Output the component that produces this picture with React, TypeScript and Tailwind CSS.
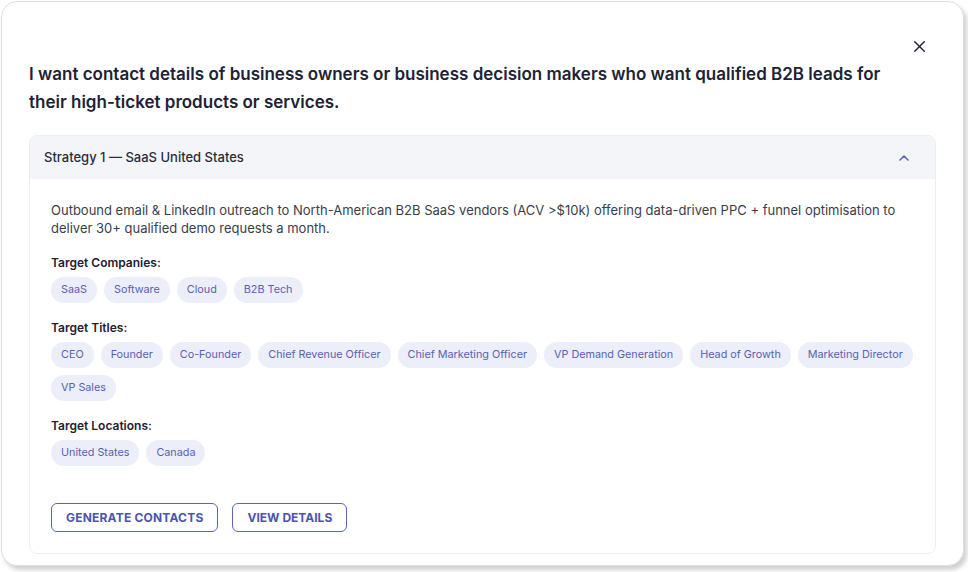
import React from "react";
import { X, ChevronUp } from "lucide-react";

const companies = ["SaaS", "Software", "Cloud", "B2B Tech"];
const titles = [
  "CEO",
  "Founder",
  "Co-Founder",
  "Chief Revenue Officer",
  "Chief Marketing Officer",
  "VP Demand Generation",
  "Head of Growth",
  "Marketing Director",
  "VP Sales",
];
const locations = ["United States", "Canada"];

const Chip = ({ label }: { label: string }) => (
  <span className="inline-flex items-center h-[26px] px-[10px] rounded-full bg-[#eceef9] text-[10.8px] text-[#5a61b3]">
    {label}
  </span>
);

const Group = ({ title, items, first }: { title: string; items: string[]; first?: boolean }) => (
  <div className={first ? "mt-[17px]" : "mt-[16px]"}>
    <p className="text-[12px] font-semibold text-[#1f2230] leading-[18px]">{title}</p>
    <div className="flex flex-wrap gap-x-[7px] gap-y-[7px] mt-[5px]">
      {items.map((item) => (
        <Chip key={item} label={item} />
      ))}
    </div>
  </div>
);

const App = () => {
  return (
    <div className="w-[968px] h-[572px] bg-white font-['Inter',sans-serif]">
      <div className="relative ml-[1px] mt-[1px] w-[963px] h-[565px] bg-white border border-[#dedede] rounded-[16px] shadow-[3px_4px_4px_rgba(0,0,0,0.18)] px-[27px] pt-[58px]">
        <button className="absolute right-[34px] top-[35px] text-[#1f2230]">
          <X size={19} strokeWidth={1.8} />
        </button>
        <h1 className="text-[17px] font-semibold leading-[28px] text-[#1e2235] pr-[40px]">
          I want contact details of business owners or business decision makers who want qualified B2B leads for
          their high-ticket products or services.
        </h1>

        <div className="mt-[19px] border border-[#eceef2] rounded-[8px] overflow-hidden">
          <div className="flex items-center justify-between h-[43px] bg-[#f4f5f8] pl-[14px] pr-[23px]">
            <span className="text-[13px] font-medium text-[#2a2d3a]">Strategy 1 — SaaS United States</span>
            <ChevronUp size={16} strokeWidth={2.4} className="text-[#5a63c2]" />
          </div>
          <div className="px-[21px] pt-[22px] pb-[21px]">
            <p className="text-[13px] leading-[18px] text-[#3a3d4a]">
              Outbound email &amp; LinkedIn outreach to North-American B2B SaaS vendors (ACV &gt;$10k) offering
              data-driven PPC + funnel optimisation to deliver 30+ qualified demo requests a month.
            </p>
            <Group title="Target Companies:" items={companies} first />
            <Group title="Target Titles:" items={titles} />
            <Group title="Target Locations:" items={locations} />
            <div className="flex gap-[14px] mt-[37px]">
              <button className="h-[29px] px-[14px] rounded-[6px] border border-[#5a63c2] text-[12px] font-bold text-[#4a55b0] tracking-[0.2px]">
                GENERATE CONTACTS
              </button>
              <button className="h-[29px] px-[14px] rounded-[6px] border border-[#5a63c2] text-[12px] font-bold text-[#4a55b0]">
                VIEW DETAILS
              </button>
            </div>
          </div>
        </div>
      </div>
    </div>
  );
};

export default App;
